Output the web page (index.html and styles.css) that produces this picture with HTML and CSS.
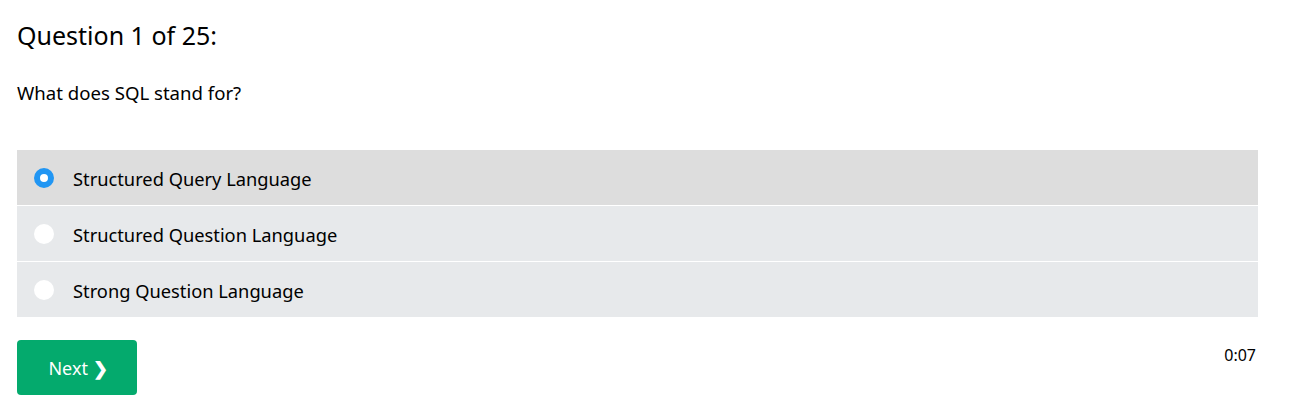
FILE: index.html
```html
<!DOCTYPE html>
<html lang="en">
<head>
<meta charset="utf-8">
<title>SQL Quiz</title>
<link rel="stylesheet" href="styles.css">
</head>
<body>
<main class="quiz">
  <h2 class="quiz-title">Question 1 of 25:</h2>
  <p class="quiz-question">What does SQL stand for?</p>
  <div class="options">
    <label class="option option-selected"><span class="radio radio-checked"></span><span class="option-text">Structured Query Language</span></label>
    <label class="option"><span class="radio"></span><span class="option-text">Structured Question Language</span></label>
    <label class="option"><span class="radio"></span><span class="option-text">Strong Question Language</span></label>
  </div>
  <div class="footer">
    <button class="next-btn" type="button">Next <span class="chev">❯</span></button>
    <span class="timer">0:07</span>
  </div>
</main>
</body>
</html>
```
FILE: styles.css
```css
html, body {
  margin: 0;
  padding: 0;
  background: #fff;
}
body {
  font-family: "Noto Sans", "Open Sans", sans-serif;
  color: #000;
}
.quiz {
  padding: 17px 33px 0 17px;
}
.quiz-title {
  margin: 0;
  font-size: 25px;
  font-weight: 400;
  line-height: 36px;
}
.quiz-question {
  margin: 26px 0 0 0;
  font-size: 18.6px;
  line-height: 27px;
}
.options {
  margin-top: 44px;
  display: flex;
  flex-direction: column;
  gap: 1px;
}
.option {
  height: 55px;
  display: flex;
  align-items: center;
  gap: 19px;
  padding-left: 17px;
  background: #e7e9eb;
  font-size: 18.3px;
  line-height: 27px;
}
.option-text {
  padding-top: 1px;
}
.option-selected {
  background: #dddddd;
}
.radio {
  width: 20px;
  height: 20px;
  border-radius: 50%;
  background: #fff;
  box-sizing: border-box;
  flex: none;
}
.radio-checked {
  background: #fff;
  border: 6px solid #2196f3;
}
.footer {
  margin-top: 23px;
  display: flex;
  justify-content: space-between;
  align-items: flex-start;
}
.next-btn {
  width: 120px;
  height: 55px;
  border: none;
  border-radius: 4px;
  background: #04aa6d;
  color: #fff;
  font-family: inherit;
  font-size: 18px;
  padding: 0 0 0 2px;
}
.chev {
  font-size: 18px;
  font-weight: 700;
}
.timer {
  font-size: 16px;
  line-height: 24px;
  margin-top: 3px;
  margin-right: 2px;
}
```
